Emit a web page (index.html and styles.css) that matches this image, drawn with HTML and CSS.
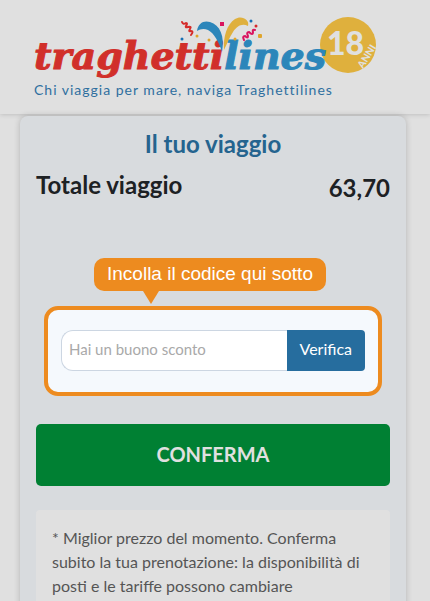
FILE: index.html
```html
<!DOCTYPE html>
<html lang="it">
<head>
<meta charset="utf-8">
<meta name="viewport" content="width=device-width, initial-scale=1">
<title>Traghettilines - Il tuo viaggio</title>
<link rel="stylesheet" href="styles.css">
</head>
<body>
<header class="header">
  <a class="brand" href="#">
    <svg class="logo" viewBox="0 0 350 64" width="350" height="64" role="img" aria-label="traghettilines 18 anni">
      <circle cx="316" cy="30" r="28" fill="#dfb03d"/>
      <g class="badge-text">
        <text class="badge-number" x="295" y="40">18</text>
        <text class="badge-years" transform="translate(331 54) rotate(-58)">ANNI</text>
      </g>
      <text class="wordmark" x="2" y="54"><tspan class="red">traghetti</tspan><tspan class="blue">lines</tspan></text>
      <path d="M165 16C166 8 172 5 178 7C188 10 193 21 190 37C187 27 182 18 176 15C172 13 168 14 165 16Z" fill="#2c86ba"/>
      <path d="M192 35C191 22 195 9 203 4C209 0 218 4 216 11C210 8 205 11 201 17C197 23 195 29 192 35Z" fill="#dfb03d"/>
      <path d="M150 7q1 3 4 1q2 0 0 3q-1 2 2 1q4-1 2 2q-2 3 1 2q3 0 0 4" fill="none" stroke="#d52b2a" stroke-width="2" stroke-linecap="round"/>
      <path d="M212 25q-2-4 1-4q3 3 3 0q-2-4 1-4q4 4 4 0q-1-3 2-2" fill="none" stroke="#d9145f" stroke-width="2" stroke-linecap="round"/>
      <g fill="#dfa52c">
        <circle cx="165" cy="21" r="1.5"/><circle cx="177" cy="25" r="1.5"/>
        <circle cx="203" cy="24" r="1.5"/><rect x="226" y="19" width="4" height="4" rx="1"/>
      </g>
      <g fill="#1670b5"><circle cx="150" cy="24" r="1.5"/><circle cx="219" cy="6" r="1.5"/></g>
      <rect x="188" y="7" width="4" height="4" fill="#d9145f"/>
      <circle cx="224" cy="11" r="1.5" fill="#d52b2a"/>
    </svg>
    <span class="tagline">Chi viaggia per mare, naviga Traghettilines</span>
  </a>
</header>
<main class="trip">
  <h1 class="title">Il tuo viaggio</h1>
  <div class="total">
    <span>Totale viaggio</span>
    <span class="amount">63,70</span>
  </div>
  <form class="voucher">
    <label class="hint" for="code">Incolla il codice qui sotto</label>
    <div class="frame">
      <input class="code" id="code" type="text" placeholder="Hai un buono sconto">
      <button class="verify" type="button">Verifica</button>
    </div>
  </form>
  <button class="confirm" type="button">CONFERMA</button>
  <p class="note">* Miglior prezzo del momento. Conferma subito la tua prenotazione: la disponibilità di posti e le tariffe possono cambiare</p>
</main>
</body>
</html>
```

FILE: styles.css
```css
* {
  box-sizing: border-box;
}

body {
  margin: 0;
  height: 100vh;
  overflow: hidden;
  background: #e0e0e0;
  color: #1d2124;
  font: 16px/24px Lato, "Liberation Sans", sans-serif;
}

.header {
  padding: 15px 32px 14px;
  box-shadow: 0 0 5px rgba(0, 0, 0, 0.2);
}

.brand {
  display: block;
  color: #2f6f9f;
  text-decoration: none;
}

.logo {
  display: block;
  overflow: visible;
}

.wordmark {
  font: italic bold 38px "DejaVu Serif", serif;
}

.red {
  fill: #d12f2a;
  stroke: #d12f2a;
}

.blue {
  fill: #2c86ba;
  stroke: #2c86ba;
}

.badge-text {
  fill: #e0e0e0;
}

.badge-number {
  font: 900 32px Lato, sans-serif;
}

.badge-years {
  font: 900 10px Lato, sans-serif;
}

.tagline {
  display: block;
  padding-left: 2px;
  font-size: 14px;
  line-height: 21px;
  letter-spacing: 1px;
}

.trip {
  position: relative;
  margin: 2px 24px 0 20px;
  padding: 12px 16px 16px;
  border-radius: 8px;
  background: #d8dbde;
  box-shadow: 0 0 6px rgba(0, 0, 0, 0.2);
}

.title {
  margin: 0;
  color: #25648f;
  font-size: 24px;
  font-weight: 700;
  line-height: 32px;
  text-align: center;
}

.total {
  display: flex;
  justify-content: space-between;
  margin-top: 8px;
  font-size: 24px;
  font-weight: 700;
  line-height: 34px;
}

.amount {
  padding-top: 3px;
}

.voucher {
  display: flex;
  flex-direction: column;
  align-items: flex-start;
  margin: 53px 8px 28px;
}

.hint {
  position: relative;
  margin: 0 0 15px 50px;
  padding: 0 13px 2px;
  border-radius: 10px;
  background: #ed8b1f;
  color: #fff;
  font: 19px/31px "Liberation Sans", sans-serif;
}

.hint::after {
  content: "";
  position: absolute;
  top: 100%;
  left: 49px;
  border: 8px solid transparent;
  border-top: 13px solid #ed8b1f;
  border-bottom: 0;
}

.frame {
  display: flex;
  width: 100%;
  padding: 20px 13px 21px;
  border: 4px solid #ed8b1f;
  border-radius: 14px;
  background: #f5f9fd;
}

.code {
  flex: 1;
  min-width: 0;
  height: 41px;
  padding: 0 7px 4px;
  border: 1px solid #ccd6e2;
  border-right: 0;
  border-radius: 12px 0 0 12px;
  background: #fff;
  font: inherit;
  font-size: 15px;
}

.code::placeholder {
  color: #a9a9a9;
  opacity: 1;
}

.verify {
  padding: 0 13px 3px;
  border: 0;
  border-radius: 0 4px 4px 0;
  background: #266d9e;
  color: #fff;
  font: inherit;
}

.confirm {
  display: block;
  width: 100%;
  padding: 15px 16px 17px;
  border: 0;
  border-radius: 5px;
  background: #008033;
  color: #e0e0e0;
  font: bold 20px/30px Lato, sans-serif;
}

.note {
  margin: 24px 0 0;
  padding: 16px;
  border-radius: 4px;
  background: #e0e0e0;
  color: #555;
}
```
